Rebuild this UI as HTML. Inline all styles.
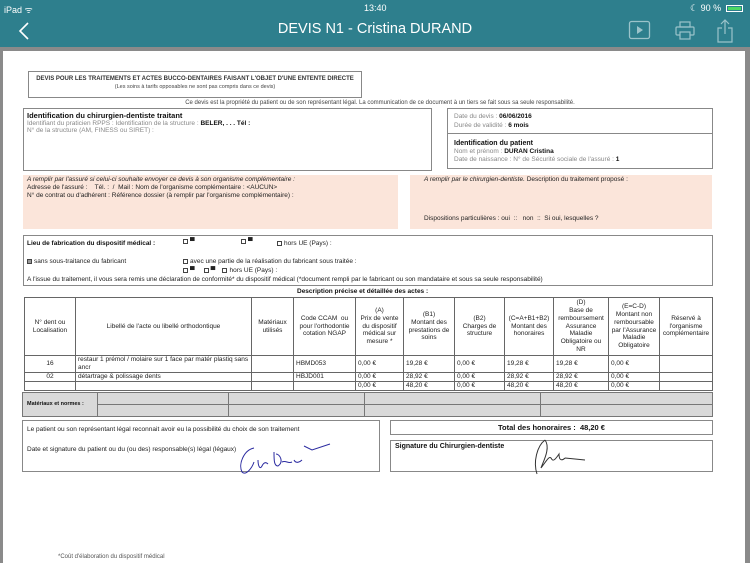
<!DOCTYPE html>
<html><head><meta charset="utf-8"><style>
*{margin:0;padding:0;box-sizing:border-box}
body{width:750px;height:563px;overflow:hidden;background:#8a8a8a;font-family:"Liberation Sans",Arial,sans-serif;position:relative;color:#222}
.a{position:absolute}
.top{left:0;top:0;width:750px;height:47px;background:#2e7f8d;color:#fff}
.page{left:3px;top:51px;width:742px;height:512px;background:#fff}
.bx{position:absolute;border:1px solid #888;background:#fff}
.t{position:absolute;font-size:6.5px;white-space:nowrap;line-height:1.25}
.g{color:#888}
.b{font-weight:bold;color:#111}
.peach{position:absolute;background:#fbe5da}
table{border-collapse:collapse;font-size:6.5px;position:absolute}
td{border:1px solid #666;padding:0 2px;vertical-align:middle;line-height:1.2}
.cb{display:inline-block;width:5px;height:5px;border:1px solid #444;vertical-align:middle;margin-right:2px}
</style></head><body>
<div class="a top">
 <div class="a" style="left:4px;top:3px;font-size:9px">iPad ᯤ</div>
 <div class="a" style="left:364px;top:3px;font-size:9px">13:40</div>
 <div class="a" style="left:690px;top:3px;font-size:9px">☾ 90 %</div>
 <div class="a" style="left:726px;top:5px;width:17px;height:7px;border:1px solid #fff;padding:1px"><div style="width:13px;height:100%;background:#4cd964"></div></div>
 <svg class="a" style="left:18px;top:22px" width="12" height="18"><path d="M10 1 L2 9 L10 17" stroke="#fff" stroke-width="1.6" fill="none"/></svg>
 <div class="a" style="left:0;width:750px;top:21px;text-align:center;font-size:14.5px">DEVIS N1 - Cristina DURAND</div>
 <svg class="a" style="left:628px;top:20px" width="24" height="20"><rect x="1.5" y="1.5" width="20" height="17" rx="2" stroke="#9bc3ca" stroke-width="1.3" fill="none"/><path d="M9 6 L15 10 L9 14Z" fill="#9bc3ca"/></svg>
 <svg class="a" style="left:675px;top:21px" width="20" height="20"><rect x="5" y="1" width="10" height="5" stroke="#9bc3ca" fill="none" stroke-width="1.2"/><rect x="1" y="6" width="18" height="8" rx="1" stroke="#9bc3ca" fill="none" stroke-width="1.2"/><rect x="5" y="11" width="10" height="7" stroke="#9bc3ca" fill="#2e7f8d" stroke-width="1.2"/></svg>
 <svg class="a" style="left:716px;top:18px" width="18" height="26"><path d="M9 2 V16 M5 6 L9 2 L13 6 M6 10 H2 V24 H16 V10 H12" stroke="#9bc3ca" stroke-width="1.2" fill="none"/></svg>
</div>
<div class="a page"></div>

<div class="bx" style="left:28px;top:71px;width:334px;height:27px"></div>
<div class="t b" style="left:28px;width:334px;top:76px;text-align:center;font-size:6px;color:#333">DEVIS POUR LES TRAITEMENTS ET ACTES BUCCO-DENTAIRES FAISANT L'OBJET D'UNE ENTENTE DIRECTE</div>
<div class="t" style="left:28px;width:334px;top:84px;text-align:center;font-size:5.5px;color:#444">(Les soins à tarifs opposables ne sont pas compris dans ce devis)</div>
<div class="t" style="left:0;width:760px;top:100px;text-align:center;font-size:6px;color:#444">Ce devis est la propriété du patient ou de son représentant légal. La communication de ce document à un tiers se fait sous sa seule responsabilité.</div>

<div class="bx" style="left:23px;top:108px;width:409px;height:63px"></div>
<div class="t b" style="left:27px;top:111px;font-size:7.5px">Identification du chirurgien-dentiste traitant</div>
<div class="t g" style="left:27px;top:120px">Identifiant du praticien RPPS : Identification de la structure : <span class="b">BELER, . . . Tél :</span></div>
<div class="t g" style="left:27px;top:127px">N° de la structure (AM, FINESS ou SIRET) :</div>

<div class="bx" style="left:447px;top:108px;width:266px;height:61px"></div>
<div class="a" style="left:447px;top:133px;width:266px;border-top:1px solid #888"></div>
<div class="t g" style="left:454px;top:113px">Date du devis : <span class="b">06/06/2016</span></div>
<div class="t g" style="left:454px;top:122px">Durée de validité : <span class="b">6 mois</span></div>
<div class="t b" style="left:454px;top:140px;font-size:7px">Identification du patient</div>
<div class="t g" style="left:454px;top:148px">Nom et prénom : <span class="b">DURAN Cristina</span></div>
<div class="t g" style="left:454px;top:156px">Date de naissance : N° de Sécurité sociale de l'assuré : <span class="b">1</span></div>

<div class="peach" style="left:23px;top:175px;width:375px;height:54px"></div>
<div class="peach" style="left:410px;top:175px;width:302px;height:54px"></div>
<div class="t" style="left:27px;top:176px;font-style:italic">A remplir par l'assuré si celui-ci souhaite envoyer ce devis à son organisme complémentaire :</div>
<div class="t" style="left:27px;top:184px">Adresse de l'assuré :&nbsp;&nbsp;&nbsp; Tél. :&nbsp; /&nbsp; Mail : Nom de l'organisme complémentaire : &lt;AUCUN&gt;</div>
<div class="t" style="left:27px;top:192px">N° de contrat ou d'adhérent : Référence dossier (à remplir par l'organisme complémentaire) :</div>
<div class="t" style="left:424px;top:176px"><i>A remplir par le chirurgien-dentiste.</i> Description du traitement proposé :</div>
<div class="t" style="left:424px;top:215px">Dispositions particulières : oui&nbsp;&nbsp;::&nbsp;&nbsp; non&nbsp;&nbsp;::&nbsp; Si oui, lesquelles ?</div>

<div class="bx" style="left:23px;top:235px;width:690px;height:51px"></div>
<div class="t b" style="left:27px;top:240px;font-weight:bold">Lieu de fabrication du dispositif médical :</div>
<div class="t" style="left:183px;top:238px"><span class="cb"></span>▀</div>
<div class="t" style="left:241px;top:238px"><span class="cb"></span>▀</div>
<div class="t" style="left:277px;top:240px"><span class="cb"></span>hors UE (Pays) :</div>
<div class="t" style="left:27px;top:258px"><span class="cb" style="background:#999"></span>sans sous-traitance du fabricant</div>
<div class="t" style="left:183px;top:258px"><span class="cb"></span>avec une partie de la réalisation du fabricant sous traitée :</div>
<div class="t" style="left:183px;top:267px"><span class="cb"></span>▀&nbsp;&nbsp;&nbsp;&nbsp;&nbsp;<span class="cb"></span>▀&nbsp;&nbsp;&nbsp;&nbsp;<span class="cb"></span>hors UE (Pays) :</div>
<div class="t" style="left:27px;top:276px">A l'issue du traitement, il vous sera remis une déclaration de conformité* du dispositif médical (*document rempli par le fabricant ou son mandataire et sous sa seule responsabilité)</div>
<div class="t b" style="left:297px;top:288px">Description précise et détaillée des actes :</div>

<table style="left:24px;top:297px;width:689px;text-align:center">
<colgroup><col style="width:51px"><col style="width:176px"><col style="width:42px"><col style="width:62px"><col style="width:48px"><col style="width:51px"><col style="width:50px"><col style="width:49px"><col style="width:55px"><col style="width:51px"><col></colgroup>
<tr style="height:58px"><td>N° dent ou Localisation</td><td>Libellé de l'acte ou libellé orthodontique</td><td>Matériaux utilisés</td><td>Code CCAM&nbsp; ou pour l'orthodontie cotation NGAP</td><td>(A)<br>Prix de vente du dispositif médical sur mesure *</td><td>(B1)<br>Montant des prestations de soins</td><td>(B2)<br>Charges de structure</td><td>(C=A+B1+B2) Montant des honoraires</td><td>(D)<br>Base de remboursement Assurance Maladie Obligatoire ou NR</td><td>(E=C-D)<br>Montant non remboursable par l'Assurance Maladie Obligatoire</td><td>Réservé à l'organisme complémentaire</td></tr>
<tr style="height:16px;text-align:left"><td style="text-align:center">16</td><td style="white-space:normal">restaur 1 prémol / molaire sur 1 face par matér plastiq sans ancr</td><td></td><td>HBMD053</td><td>0,00 €</td><td>19,28 €</td><td>0,00 €</td><td>19,28 €</td><td>19,28 €</td><td>0,00 €</td><td></td></tr>
<tr style="height:9px;text-align:left"><td style="text-align:center">02</td><td>détartrage &amp; polissage dents</td><td></td><td>HBJD001</td><td>0,00 €</td><td>28,92 €</td><td>0,00 €</td><td>28,92 €</td><td>28,92 €</td><td>0,00 €</td><td></td></tr>
<tr style="height:9px;text-align:left"><td></td><td></td><td></td><td></td><td>0,00 €</td><td>48,20 €</td><td>0,00 €</td><td>48,20 €</td><td>48,20 €</td><td>0,00 €</td><td></td></tr>
</table>

<div class="a" style="left:22px;top:392px;width:691px;height:25px;background:#d9d9d9;border:1px solid #777"></div>
<div class="a" style="left:97px;top:404px;width:616px;border-top:1px solid #777"></div>
<div class="a" style="left:97px;top:392px;height:25px;border-left:1px solid #777"></div>
<div class="a" style="left:228px;top:392px;height:25px;border-left:1px solid #777"></div>
<div class="a" style="left:364px;top:392px;height:25px;border-left:1px solid #777"></div>
<div class="a" style="left:540px;top:392px;height:25px;border-left:1px solid #777"></div>
<div class="t b" style="left:27px;top:401px;font-size:5.5px">Matériaux et normes :</div>

<div class="bx" style="left:22px;top:420px;width:358px;height:52px"></div>
<div class="t" style="left:27px;top:426px">Le patient ou son représentant légal reconnait avoir eu la possibilité du choix de son traitement</div>
<div class="t" style="left:27px;top:446px">Date et signature du patient ou du (ou des) responsable(s) légal (légaux)</div>
<div class="bx" style="left:390px;top:420px;width:323px;height:15px"></div>
<div class="t b" style="left:390px;width:323px;text-align:center;top:423px;font-size:7.5px">Total des honoraires :&nbsp; 48,20 €</div>
<div class="bx" style="left:390px;top:440px;width:323px;height:32px;background:transparent"></div>
<div class="t b" style="left:395px;top:443px;font-size:7px">Signature du Chirurgien-dentiste</div>
<svg class="a" style="left:230px;top:440px" width="110" height="40"><path d="M24 8 C14 10 8 24 12 32 C16 36 22 28 24 22 M28 20 C28 26 30 30 32 26 C34 22 36 22 38 24 M44 12 C44 20 44 26 48 26 C54 22 50 14 46 14 M52 22 C56 20 58 24 62 22 M64 20 C66 24 70 22 72 20 M74 6 L82 10 L100 4" stroke="#2a2aa0" stroke-width="1" fill="none"/></svg>
<svg class="a" style="left:515px;top:436px" width="80" height="40"><path d="M30 4 C22 10 18 26 22 38 M30 4 C36 12 28 26 26 32 C32 24 34 20 36 22 C38 26 40 24 44 18 C44 26 48 24 50 22 M50 22 L70 24" stroke="#333" stroke-width="1" fill="none"/></svg>

<div class="t" style="left:58px;top:554px;font-size:6px;color:#555">*Coût d'élaboration du dispositif médical</div>
</body></html>
